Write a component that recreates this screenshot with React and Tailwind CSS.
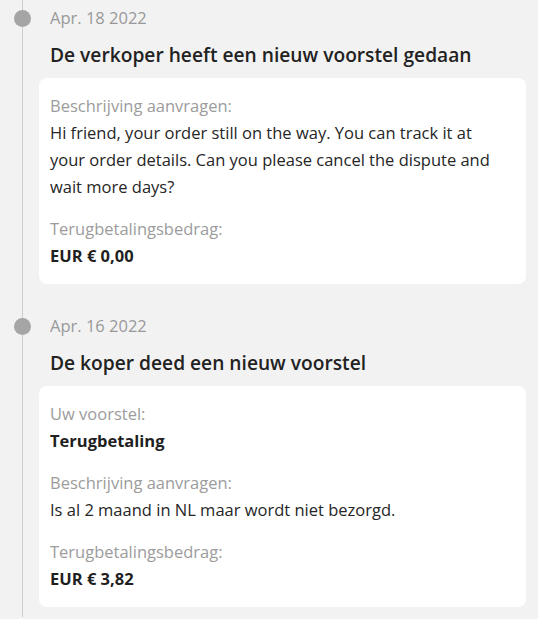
import React from 'react';

const items = [
  {
    date: 'Apr. 18 2022',
    title: 'De verkoper heeft een nieuw voorstel gedaan',
    fields: [
      { label: 'Beschrijving aanvragen:', value: 'Hi friend, your order still on the way. You can track it at your order details. Can you please cancel the dispute and wait more days?' },
      { label: 'Terugbetalingsbedrag:', value: 'EUR € 0,00', bold: true },
    ],
  },
  {
    date: 'Apr. 16 2022',
    title: 'De koper deed een nieuw voorstel',
    fields: [
      { label: 'Uw voorstel:', value: 'Terugbetaling', bold: true },
      { label: 'Beschrijving aanvragen:', value: 'Is al 2 maand in NL maar wordt niet bezorgd.' },
      { label: 'Terugbetalingsbedrag:', value: 'EUR € 3,82', bold: true },
    ],
  },
];

const TimelineItem = ({ item, last }) => (
  <div className={last ? 'pt-[6px] pb-[10px]' : 'pt-[6px] pb-[24px]'}>
    <div className="flex items-center h-6">
      <span className="-ml-[9px] w-[17px] h-[17px] rounded-full bg-[#a5a5a5] shrink-0" />
      <span className="ml-[19px] text-[16.5px] leading-6 text-[#999]">{item.date}</span>
    </div>
    <h3 className="ml-[27px] mt-[11px] text-[19.2px] leading-7 font-semibold text-[#222]">{item.title}</h3>
    <div className="ml-4 mt-[9px] bg-white rounded-lg pl-[11px] pr-5 pt-[15px] pb-[15px] flex flex-col gap-4">
      {item.fields.map((f, i) => (
        <div key={i}>
          <div className="text-[16.5px] leading-[26px] text-[#9c9c9c]">{f.label}</div>
          {f.bold ? (
            <div className="text-[16.5px] leading-[27px] font-bold text-[#1f1f1f]">{f.value}</div>
          ) : (
            <div className="text-[16.5px] leading-[27px] text-[#262626]">{f.value}</div>
          )}
        </div>
      ))}
    </div>
  </div>
);

export default function App() {
  return (
    <div className="min-h-screen w-[538px] bg-[#f2f2f2] overflow-hidden" style={{ fontFamily: '"Open Sans", sans-serif' }}>
      <div className="ml-[22px] border-l border-[#cccccc] mr-3">
        {items.map((item, i) => (
          <TimelineItem key={i} item={item} last={i === items.length - 1} />
        ))}
      </div>
    </div>
  );
}
